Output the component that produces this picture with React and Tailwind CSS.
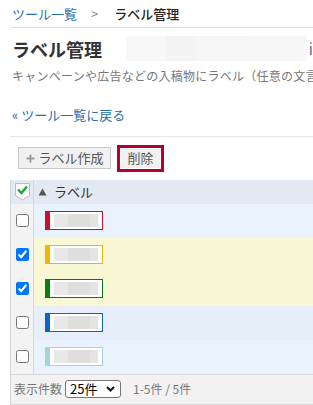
import { Plus } from "lucide-react";

const rows = [
  { color: "#c8102e", bg: "bg-[#eaf2fd]", checked: false },
  { color: "#f5b400", bg: "bg-[#faf7d4]", checked: true },
  { color: "#0a7d12", bg: "bg-[#faf7d4]", checked: true },
  { color: "#0a63c9", bg: "bg-[#e6eefa]", checked: false },
  { color: "#a7d3d3", bg: "bg-[#eaf2fd]", checked: false },
];

function LabelChip({ color }) {
  return (
    <div
      className="flex h-[19px] w-[58px] border bg-white"
      style={{ borderColor: color }}
    >
      <div className="w-[4px]" style={{ backgroundColor: color }} />
      <div className="my-[2px] ml-[4px] flex w-[44px]">
        <div className="w-[14px] bg-[#e8e8e8]" />
        <div className="flex-1 bg-[#dedede]" />
        <div className="w-[8px] bg-[#e4e4e4]" />
      </div>
    </div>
  );
}

export default function App() {
  return (
    <div className="h-[405px] w-[313px] overflow-hidden bg-white font-['Meiryo','Noto_Sans_CJK_JP',sans-serif] text-[13px] text-[#333]">
      <div className="pl-[10px]">
        <div className="flex h-[28px] items-center border-b border-[#dcdcdc] pl-[2px]">
          <span className="text-[#2a6cb0]">ツール一覧</span>
          <span className="ml-[14px] text-[#888]">&gt;</span>
          <span className="ml-[16px] font-medium text-[#222]">ラベル管理</span>
        </div>

        <div className="mt-[8px] flex h-[25px] items-center">
          <h1 className="pl-[2px] text-[18px] font-bold leading-none text-[#333]">
            ラベル管理
          </h1>
          <div className="ml-[24px] flex h-[25px] flex-1 items-center">
            <div className="h-full w-[40px] bg-[#f8f8f8]" />
            <div className="h-full w-[30px] bg-[#f4f4f4]" />
            <div className="h-full w-[50px] bg-[#f6f6f6]" />
            <div className="h-full flex-1 bg-[#f7f7f7]" />
            <span className="ml-[2px] text-[15px] leading-none text-[#7a5a8a]">i</span>
          </div>
        </div>

        <p className="mt-[6px] whitespace-nowrap pl-[2px] text-[12px] tracking-[0.25px] text-[#777]">
          キャンペーンや広告などの入稿物にラベル（任意の文言
        </p>

        <div className="mt-[20px] pl-[2px] text-[#2a6cb0]">« ツール一覧に戻る</div>

        <div className="mt-[11px] border-b border-[#e6e6e6]" />

        <div className="mt-[8px] flex items-center pl-[8px]">
          <button className="flex h-[22px] w-[93px] items-center justify-center border border-[#c8c8c8] bg-[#f1f1f1] text-[13px] text-[#555]">
            <Plus size={11} strokeWidth={4} className="mr-[2px] text-[#999]" />
            ラベル作成
          </button>
          <div className="ml-[6px] border-[3px] border-[#b8002d] p-[1px]">
            <button className="flex h-[19px] w-[39px] items-center justify-center bg-[#f1f1f1] text-[13px] text-[#555]">
              削除
            </button>
          </div>
        </div>

        <div className="mt-[8px] border-l border-[#d5d5d5]">
          <div className="flex h-[24px] bg-[#e3e9f2]">
            <div className="flex w-[23px] items-center justify-center border-r border-[#d0d6de]">
              <svg width="15" height="18" viewBox="0 0 15 18">
                <path
                  d="M0.5 0.5 H14.5 V12.5 L7.5 17 L0.5 12.5 Z"
                  fill="#fafafa"
                  stroke="#bdbdbd"
                />
                <path
                  d="M3 6.5 L6.5 10 L12 3.5"
                  fill="none"
                  stroke="#22a532"
                  strokeWidth="2.4"
                />
              </svg>
            </div>
            <div className="flex items-center pl-[4px]">
              <svg width="9" height="8" viewBox="0 0 9 8">
                <path d="M4.5 0.5 L8.5 7.5 H0.5 Z" fill="#555" />
              </svg>
              <span className="ml-[7px] text-[#333]">ラベル</span>
            </div>
          </div>

          {rows.map((r, i) => (
            <div key={i} className="flex h-[34px]">
              <div className="flex w-[23px] items-center justify-center border-r border-[#d8d8d8] bg-[#f3f3f3]">
                <input
                  type="checkbox"
                  checked={r.checked}
                  readOnly
                  className="m-0 h-[13px] w-[13px]"
                />
              </div>
              <div className={`flex flex-1 items-center pl-[11px] ${r.bg}`}>
                <LabelChip color={r.color} />
              </div>
            </div>
          ))}

          <div className="flex h-[31px] items-center border-t border-b border-[#d8d8d8] bg-[#f2f2f2] pl-[3px] text-[12px] text-[#777]">
            <span>表示件数</span>
            <div className="ml-[3px] flex h-[18px] w-[56px] items-center justify-between rounded-[3px] border border-[#767676] bg-white pl-[4px] pr-[5px] text-[13px] text-black">
              <span>25件</span>
              <svg width="9" height="6" viewBox="0 0 9 6">
                <path d="M1 1 L4.5 4.5 L8 1" fill="none" stroke="#111" strokeWidth="2" />
              </svg>
            </div>
            <span className="ml-[12px]">1-5件 / 5件</span>
          </div>
        </div>
      </div>
    </div>
  );
}
